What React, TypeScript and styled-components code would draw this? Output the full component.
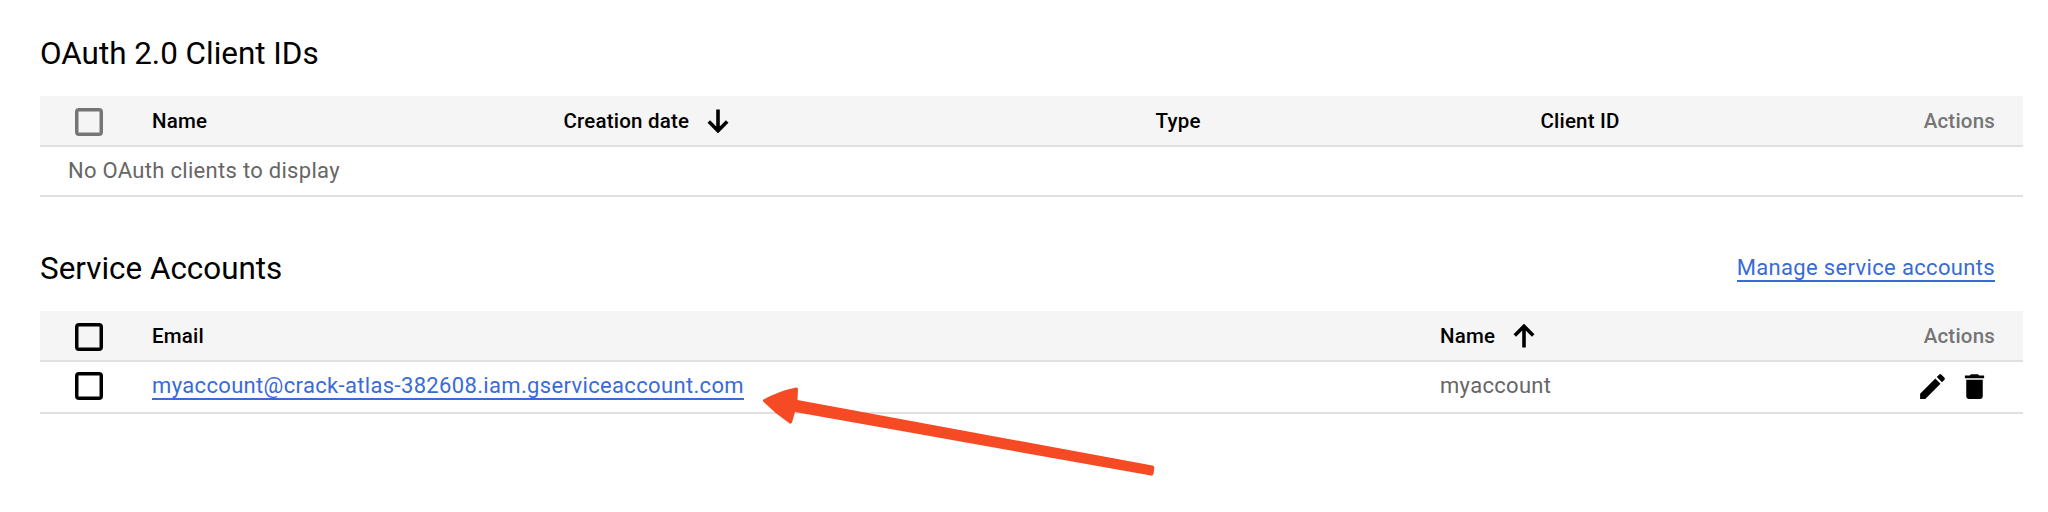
import React from "react";
import styled, { createGlobalStyle } from "styled-components";

const Global = createGlobalStyle`
  * { box-sizing: border-box; }
  body { margin: 0; background: #fff; font-family: Roboto, "Liberation Sans", sans-serif; color: #000; }
`;

const Page = styled.main`
  position: relative;
  width: 2048px;
  height: 512px;
  padding: 32px 24px 0 40px;
  overflow: hidden;
`;

const Section = styled.section<{ $gap?: number }>`
  width: 1983px;
  margin-bottom: ${(p) => p.$gap ?? 0}px;
`;

const SectionHead = styled.header`
  display: flex;
  align-items: center;
  justify-content: space-between;
  height: 42px;
  margin-bottom: 22px;
  padding-right: 28px;
`;

const Title = styled.h2`
  margin: 0;
  padding-top: 2px;
  font-size: 31.4px;
  line-height: 42px;
  font-weight: 400;
`;

const Link = styled.a`
  font-size: 22px;
  line-height: 25px;
  letter-spacing: 0.34px;
  color: #396bd7;
  text-decoration: none;
  border-bottom: 2px solid #396bd7;
  white-space: nowrap;
`;

const Row = styled.div<{ $columns: string; $height: number; $head?: boolean }>`
  display: grid;
  grid-template-columns: ${(p) => p.$columns};
  align-items: center;
  height: ${(p) => p.$height}px;
  padding-right: 28px;
  background: ${(p) => (p.$head ? "#f5f5f5" : "#fff")};
  border-bottom: 2px solid #e0e0e0;
`;

const HeadCell = styled.div<{ $muted?: boolean }>`
  display: flex;
  align-items: center;
  gap: 17px;
  justify-content: ${(p) => (p.$muted ? "flex-end" : "flex-start")};
  font-size: 20.5px;
  line-height: 28px;
  font-weight: 500;
  letter-spacing: 0.2px;
  color: ${(p) => (p.$muted ? "#757575" : "#000")};
  white-space: nowrap;
`;

const Cell = styled.div`
  padding-bottom: 2px;
  font-size: 22px;
  line-height: 28px;
  letter-spacing: 0.3px;
  color: #666;
  white-space: nowrap;
`;

const EmptyCell = styled(Cell)`
  padding: 0 0 0 28px;
`;

const Checkbox = styled.span<{ $disabled?: boolean; $raised?: boolean }>`
  display: block;
  width: 28px;
  height: 28px;
  margin: ${(p) => (p.$raised ? -2 : 3)}px 0 0 35px;
  color: ${(p) => (p.$disabled ? "#757575" : "#000")};
  border: 3px solid currentColor;
  border-radius: 4px;
  box-shadow: inset 0 0 0 0.5px currentColor;
`;

const ActionGroup = styled.div`
  display: flex;
  justify-content: flex-end;
  gap: 9px;
  padding: 0 4px 1px 0;
`;

const Icon = styled.svg<{ $size: number }>`
  display: block;
  width: ${(p) => p.$size}px;
  height: ${(p) => p.$size}px;
  fill: currentColor;
  color: #000;
`;

const Pointer = styled.svg`
  position: absolute;
  left: 760px;
  top: 384px;
  width: 400px;
  height: 96px;
`;

const SortArrow = ({ up }: { up?: boolean }) => (
  <Icon $size={24} viewBox="0 0 24 24">
    <path
      d="M12 0.5V21M2.8 12.6L12 21.8L21.2 12.6"
      fill="none"
      stroke="currentColor"
      strokeWidth="3.6"
      transform={up ? "rotate(180 12 12)" : undefined}
    />
  </Icon>
);

const oauthColumns = "112px 411.5px 592px 385px 1fr 120px";
const accountColumns = "112px 1288px 1fr 120px";

export default function App() {
  return (
    <>
      <Global />
      <Page>
        <Section $gap={50}>
          <SectionHead>
            <Title>OAuth 2.0 Client IDs</Title>
          </SectionHead>
          <Row $head $columns={oauthColumns} $height={51}>
            <Checkbox $disabled />
            <HeadCell>Name</HeadCell>
            <HeadCell>
              Creation date
              <SortArrow />
            </HeadCell>
            <HeadCell>Type</HeadCell>
            <HeadCell>Client ID</HeadCell>
            <HeadCell $muted>Actions</HeadCell>
          </Row>
          <Row $columns="1fr" $height={50}>
            <EmptyCell>No OAuth clients to display</EmptyCell>
          </Row>
        </Section>
        <Section>
          <SectionHead>
            <Title>Service Accounts</Title>
            <Link>Manage service accounts</Link>
          </SectionHead>
          <Row $head $columns={accountColumns} $height={51}>
            <Checkbox />
            <HeadCell>Email</HeadCell>
            <HeadCell>
              Name
              <SortArrow up />
            </HeadCell>
            <HeadCell $muted>Actions</HeadCell>
          </Row>
          <Row $columns={accountColumns} $height={52}>
            <Checkbox $raised />
            <Cell>
              <Link>myaccount@crack-atlas-382608.iam.gserviceaccount.com</Link>
            </Cell>
            <Cell>myaccount</Cell>
            <ActionGroup>
              <Icon $size={33} viewBox="0 0 24 24">
                <path d="M3 17.25V21h3.75L17.81 9.94l-3.75-3.75L3 17.25zM20.71 7.04a1 1 0 0 0 0-1.41l-2.34-2.34a1 1 0 0 0-1.41 0l-1.83 1.83 3.75 3.75 1.83-1.83z" />
              </Icon>
              <Icon $size={33} viewBox="0 0 24 24">
                <path d="M6 19c0 1.1.9 2 2 2h8c1.1 0 2-.9 2-2V7H6v12zM19 4h-3.5l-1-1h-5l-1 1H5v2h14V4z" />
              </Icon>
            </ActionGroup>
          </Row>
        </Section>
        <Pointer viewBox="760 384 400 96">
          <path
            d="M763.5 399.5Q779 391 796 387.5Q798 387.300 798 389L797.500 400L1152.500 465.500Q1154.500 466 1154.300 468L1153.500 474Q1153 476 1151 475.600L795 412L792 422.500Q791 424.500 789 423Q775 413.500 763.200 401.500Q762.600 400.300 763.500 399.500Z"
            fill="#f64a24"
          />
        </Pointer>
      </Page>
    </>
  );
}
